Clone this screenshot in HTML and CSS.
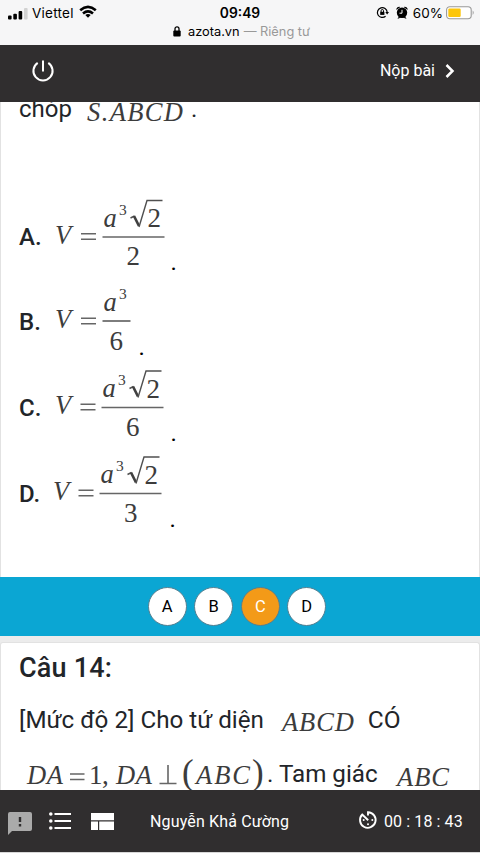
FILE: index.html
```html
<!DOCTYPE html>
<html lang="vi">
<head>
<meta charset="utf-8">
<title>Azota</title>
<link rel="stylesheet" href="styles.css">
</head>
<body>
<div class="status">
  <div class="status-row">
    <div class="carrier">
      <svg width="20" height="14" viewBox="0 0 20 14"><rect x="0" y="8.5" width="3.6" height="4" rx="1"/><rect x="5.3" y="6.7" width="3.6" height="5.8" rx="1"/><rect x="10.6" y="4" width="3.6" height="8.5" rx="1"/><rect x="16" y="1" width="3.6" height="11.5" rx="1" fill="#d2d2d2"/></svg>
      <span class="carrier-name">Viettel</span>
      <svg class="wifi" width="18" height="14" viewBox="0 0 18 14" fill="none" stroke="#000" stroke-width="2.6"><path d="M1.2 5.2Q9-1.5 16.8 5.2"/><path d="M4 8.5Q9 4.3 14 8.5"/><path d="M6.3 10Q9 8 11.7 10L9 12.8Z" fill="#000" stroke="none"/></svg>
    </div>
    <span class="clock">09:49</span>
    <div class="power">
      <svg width="13" height="13" viewBox="0 0 13 13"><path d="M11.2 6.2A4.9 4.9 0 1 0 9.6 10.2" fill="none" stroke="#000" stroke-width="1.2"/><path d="M9.3 5.9h3.7l-1.9 2.6z"/><rect x="4.2" y="5.8" width="4.2" height="3.1"/><path d="M5.1 6V4.7a1.2 1.2 0 0 1 2.4 0V6" fill="none" stroke="#000"/></svg>
      <svg class="alarm" width="12" height="13" viewBox="0 0 12 13"><circle cx="6" cy="6.8" r="5.2"/><path d="M.4 4a2.8 2.8 0 0 1 4-3zM11.6 4a2.8 2.8 0 0 0-4-3zM1.4 12.5l1.8-2h5.600l1.800 2H9l-1-1H4l-1 1z"/><path d="M6 3.800v3.400H3.500" fill="none" stroke="#fff"/></svg>
      <span class="percent">60%</span>
      <svg width="28" height="14" viewBox="0 0 28 14"><rect x=".6" y=".8" width="24.6" height="12" rx="3.2" fill="#fff" stroke="#999" stroke-width="1.1"/><rect x="2.3" y="2.6" width="12.4" height="8.4" rx="1.2" fill="#fcc60b"/><path d="M26.7 4.6q2 2.2 0 4.5z" fill="#999"/></svg>
    </div>
  </div>
  <div class="address">
    <svg width="8" height="11" viewBox="0 0 8 11"><rect x=".3" y="4.4" width="7.4" height="6.2" rx="1"/><path d="M2 5V2.8a2 2 0 0 1 4 0V5" fill="none" stroke="#000" stroke-width="1.3"/></svg>
    <span class="host">azota.vn</span><span class="private">— Riêng tư</span>
  </div>
</div>
<header class="topbar">
  <svg width="24" height="24" viewBox="0 0 24 24" fill="none" stroke="#fff" stroke-width="2"><path d="M12 1.5v11M6.700 3.800a9.600 9.600 0 1 0 10.600 0"/></svg>
  <div class="submit"><span>Nộp bài</span><svg width="10" height="14" viewBox="0 0 10 14" fill="none" stroke="#fff" stroke-width="2.5"><path d="M1.5 1l6 6-6 6"/></svg></div>
</header>
<main class="sheet">
  <section class="card answers">
    <p class="intro"><span class="chop">chóp</span><svg class="sabcd" width="100" height="30"><text class="m" x="0" y="25" textLength="96">S.ABCD</text></svg><span class="stop">.</span></p>
    <div class="option"><b>A.</b>
      <svg width="119" height="76"><text class="m" x="0" y="47.5">V</text><path class="eq" d="M26 37.7h15M26 43.2h15"/><path class="bar" d="M47.5 41h62"/><text class="m" x="48.5" y="30.5">a</text><text class="n sup" x="64" y="19">3</text><path class="root" d="M75.5 22l4-2"/><path class="tick" d="M79 20l5 10"/><path class="root" d="M84 31l8-26.500h15.500"/><text class="n" x="92.500" y="31">2</text><text class="n" x="71.500" y="69">2</text></svg><i class="dot">.</i></div>
    <div class="option"><b>B.</b>
      <svg width="87" height="76"><text class="m" x="0" y="47">V</text><path class="eq" d="M26 37.2h15M26 42.7h15"/><path class="bar" d="M47.5 40h28"/><text class="m" x="48.5" y="29.5">a</text><text class="n sup" x="64" y="17.500">3</text><text class="n" x="54.500" y="69">6</text></svg><i class="dot">.</i></div>
    <div class="option"><b>C.</b>
      <svg width="119" height="76"><text class="m" x="0" y="47">V</text><path class="eq" d="M25.5 37.2h15M25.5 42.7h15"/><path class="bar" d="M46.500 40.500h62"/><text class="m" x="47.500" y="30">a</text><text class="n sup" x="63" y="18">3</text><path class="root" d="M74.500 21.500l4-2"/><path class="tick" d="M78 19.500l5 10"/><path class="root" d="M83 30.500l8-26.500h15.500"/><text class="n" x="91.500" y="30.500">2</text><text class="n" x="71" y="68.500">6</text></svg><i class="dot">.</i></div>
    <div class="option"><b>D.</b>
      <svg width="118" height="76"><text class="m" x="-2" y="47">V</text><path class="eq" d="M23.500 37.200h15M23.500 42.700h15"/><path class="bar" d="M44.500 40.500h62"/><text class="m" x="45.500" y="30">a</text><text class="n sup" x="61" y="18">3</text><path class="root" d="M72.500 21.500l4-2"/><path class="tick" d="M76 19.500l5 10"/><path class="root" d="M81 30.500l8-26.500h15.500"/><text class="n" x="89.500" y="30.500">2</text><text class="n" x="69" y="68.500">3</text></svg><i class="dot">.</i></div>
  </section>
  <div class="choices"><span>A</span><span>B</span><span class="picked">C</span><span>D</span></div>
  <section class="card question">
    <h2>Câu 14:</h2>
    <p class="line"><span class="level">[Mức độ 2] Cho tứ diện</span><svg class="abcd" width="76" height="32"><text class="m" x="1" y="24" textLength="72">ABCD</text></svg><span class="co">CÓ</span></p>
    <p class="line second"><svg width="242" height="40"><text class="m" x="0" y="27" textLength="36">DA</text><path class="eq" d="M43 17h14.5M43 22.5h14.5"/><text class="n" x="62" y="27">1</text><text class="n" x="75" y="27">,</text><text class="m" x="89" y="27" textLength="36">DA</text><path class="eq" d="M132.5 26.5h17M141 26.5V8"/><text class="n paren" x="155" y="27">(</text><text class="m" x="169" y="27" textLength="54">ABC</text><text class="n paren" x="225" y="27">)</text></svg><span class="tam">. Tam giác</span><svg class="abc" width="58" height="40"><text class="m" x="2" y="29" textLength="52">ABC</text></svg></p>
  </section>
</main>
<footer class="bottombar">
  <svg class="report" width="24" height="24" viewBox="0 0 24 24"><path d="M2 0h20q2 0 2 2v15q0 2-2 2H4l-4 4V2q0-2 2-2z" fill="#aaa"/><path d="M12 5v5M12 12v2.5" stroke="#302e2f" stroke-width="2.4"/></svg>
  <svg class="list" width="22" height="18" viewBox="0 0 22 18" fill="#fff"><circle cx="1.8" cy="2" r="1.8"/><circle cx="1.8" cy="9" r="1.8"/><circle cx="1.8" cy="16" r="1.8"/><path d="M5.5 1H22v2H5.500zM5.500 8H22v2H5.500zM5.500 15H22v2H5.500z"/></svg>
  <svg class="grid" width="23" height="17" viewBox="0 0 23 17" fill="#fff"><path d="M0 0h23v7.300H0zM0 8.500h7v8.500H0zM8.200 8.500H23V17H8.200z"/></svg>
  <span class="student">Nguyễn Khả Cường</span>
  <svg class="timer" width="18" height="18" viewBox="0 0 18 18" fill="none" stroke="#fff" stroke-width="1.9"><path d="M9 4.5V1.200A7.800 7.800 0 1 1 3.300 3.500L9.200 9.300"/><g fill="#fff" stroke="none"><circle cx="13.300" cy="9" r="1"/><circle cx="9" cy="13.200" r="1"/><circle cx="4.700" cy="9" r="1"/></g></svg>
  <span class="time">00 : 18 : 43</span>
</footer>
</body>
</html>
```
FILE: styles.css
```css
* { box-sizing: border-box; }
body { margin: 0; height: 853px; overflow: hidden; display: flex; flex-direction: column; font-family: Roboto, sans-serif; color: #222529; background: #d8d8d8; }
svg { display: block; flex: none; overflow: visible; }
p, h2 { margin: 0; }
span { white-space: nowrap; }
.status { height: 45px; flex: none; background: #f6f6f7; color: #000; font-family: Inter, sans-serif; }
.status-row { height: 24px; display: grid; grid-template-columns: 1fr auto 1fr; align-items: center; padding: 1px 6px 0 8px; }
.carrier { display: flex; align-items: center; font-size: 13.5px; }
.carrier svg:first-child { margin-top: 3px; }
.carrier-name { margin-left: 4px; letter-spacing: 0.25px; }
.carrier .wifi { margin-left: 5px; margin-top: -2px; }
.clock { font-weight: 600; font-size: 13.8px; padding-right: 2px; }
.power { display: flex; align-items: center; justify-content: flex-end; font-size: 13.5px; }
.alarm { margin-left: 7px; }
.percent { margin: 0 3px 0 5px; }
.address { height: 14px; display: flex; align-items: center; padding-left: 173px; font-size: 12.8px; }
.host { margin-left: 7px; }
.private { margin-left: 4px; color: #999; }
.topbar { height: 57px; flex: none; background: #302e2f; display: flex; align-items: center; justify-content: space-between; padding: 0 25px 6px 31px; color: #fff; }
.submit { display: flex; align-items: center; gap: 10px; font-size: 16px; }
.sheet { height: 688px; flex: none; overflow: hidden; background: #ececec; }
.card { background: #fff; border: solid #e2e2e2; border-width: 0 1px; padding-left: 18px; }
.answers { height: 475px; }
.intro { height: 84px; display: flex; align-items: flex-start; font-size: 24px; line-height: 28px; }
.chop { margin-top: -7px; width: 68px; }
.sabcd { margin-top: -6px; }
.stop { margin: -7px 0 0 4px; }
.option { height: 85.7px; display: flex; align-items: flex-start; padding-top: 9.5px; }
.option b { font-weight: 500; font-size: 24px; line-height: 28px; width: 35.5px; margin-top: 27px; }
.dot { font-style: normal; font-size: 24px; line-height: 28px; margin: 52px 0 0 -3px; color: #000; }
.m { font-family: "Liberation Serif", serif; font-style: italic; font-size: 26.5px; fill: #3c3c3c; }
.n { font-family: "Liberation Serif", serif; font-size: 27px; fill: #3c3c3c; }
.sup { font-size: 15.5px; }
.paren { font-size: 35px; }
.eq { fill: none; stroke: #666; stroke-width: 1.6; }
.bar { fill: none; stroke: #666; stroke-width: 1.7; }
.root { fill: none; stroke: #505050; stroke-width: 1.4; }
.tick { fill: none; stroke: #404040; stroke-width: 2.6; }
.choices { height: 59px; background: #0ba6d3; display: flex; justify-content: center; align-items: center; gap: 7.5px; padding-right: 6px; color: #000; }
.choices span { width: 39px; height: 39px; border-radius: 50%; background: #fff; border: 1px solid #537f91; display: flex; align-items: center; justify-content: center; font-size: 16.5px; }
.choices .picked { background: #f39a18; color: #fff; }
.question { margin-top: 6px; height: 160px; border-top-width: 1px; border-radius: 3px 3px 0 0; }
.question h2 { font-size: 27px; font-weight: 500; line-height: 30px; padding-top: 10px; letter-spacing: 0.2px; }
.line { display: flex; font-size: 24.2px; line-height: 30px; height: 54px; padding-top: 22px; }
.abcd { margin: 2px 11px 0 17px; }
.co { font-size: 24.5px; }
.second { padding: 20px 0 0 8px; }
.tam { margin: 2px 0 0 -2px; }
.abc { margin-left: 17px; }
.bottombar { height: 62px; flex: none; background: #302e2f; display: flex; align-items: center; color: #fff; font-size: 16px; padding-left: 8px; }
.report { margin-top: 6px; }
.list { margin-left: 17px; }
.grid { margin-left: 20px; }
.student { width: 209px; margin-left: 36px; letter-spacing: 0.15px; }
.timer { margin-top: -3px; }
.time { margin-left: 7px; letter-spacing: 0.1px; }
```
